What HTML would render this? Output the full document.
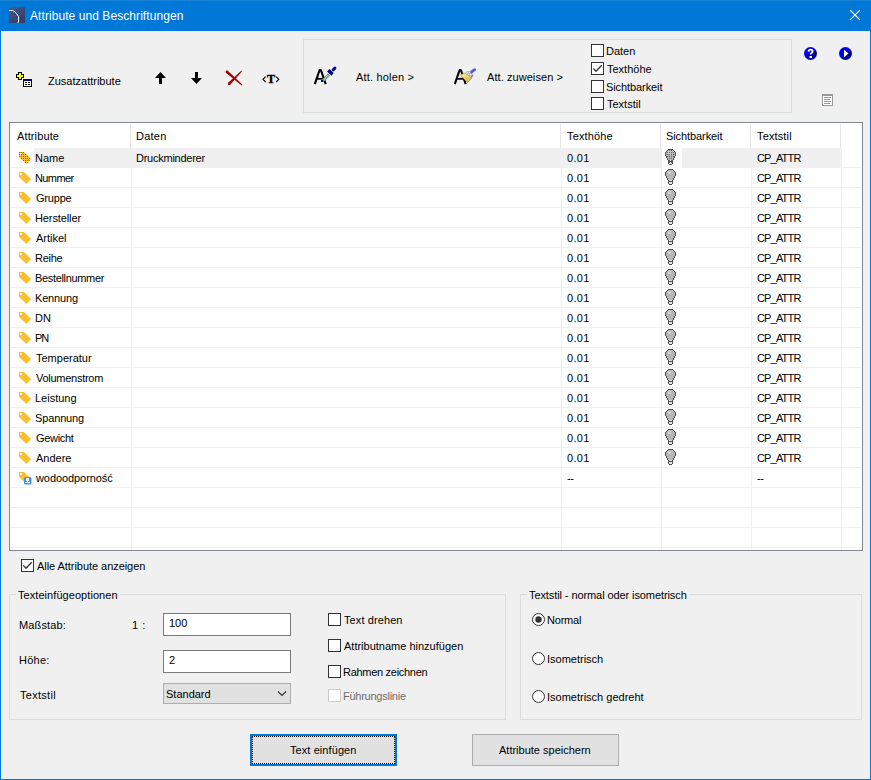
<!DOCTYPE html>
<html><head><meta charset="utf-8"><style>
html,body{margin:0;padding:0;}
body{width:871px;height:780px;position:relative;overflow:hidden;background:#0078d7;font-family:'Liberation Sans', sans-serif;}
.a{position:absolute;box-sizing:border-box;}
.t{position:absolute;font-size:11px;line-height:13px;white-space:nowrap;color:#000;}
svg{position:absolute;overflow:visible;}
</style></head><body>
<!-- client area -->
<div class="a" style="left:1px;top:31px;width:869px;height:748px;background:#f0f0f0"></div>
<div class="a" style="left:0;top:0;width:871px;height:1px;background:#1883d7"></div>
<!-- title icon -->
<svg style="left:9px;top:7px" width="16" height="16" viewBox="0 0 16 16">
 <defs><linearGradient id="tg" x1="0" y1="0" x2="1" y2="1"><stop offset="0" stop-color="#4a5a8a"/><stop offset="1" stop-color="#2c3a66"/></linearGradient></defs>
 <rect width="16" height="16" fill="url(#tg)"/>
 <path d="M0 3.5 H3.5 L5.5 4.5 L7.5 6.5 L8.5 8 L9.5 9.5 V15 L8.5 16" fill="none" stroke="#fff" stroke-width="1"/>
</svg>
<!-- close -->
<svg style="left:850px;top:10px" width="11" height="11" viewBox="0 0 11 11"><path d="M0.5 0.5 L9.5 9.5 M9.5 0.5 L0.5 9.5" stroke="#fff" stroke-width="1.1" fill="none" stroke-linecap="square"/></svg>

<!-- toolbar: plus-table -->
<svg style="left:16px;top:72px" width="16" height="15" viewBox="0 0 16 15" shape-rendering="crispEdges">
 <path d="M2 0h4v2h2v4h-2v2h-4v-2h-2v-4h2z" fill="#000"/>
 <path d="M3 1h2v2h2v2h-2v2h-2v-2h-2v-2h2z" fill="#ffff00"/>
 <rect x="7" y="7" width="9" height="8" fill="#000"/>
 <rect x="7" y="7" width="9" height="2" fill="#000080"/>
 <rect x="8" y="9" width="7" height="5" fill="#fff"/>
 <rect x="9" y="10" width="2" height="1" fill="#000"/><rect x="12" y="10" width="2" height="1" fill="#000"/>
 <rect x="9" y="12" width="2" height="1" fill="#000"/><rect x="12" y="12" width="2" height="1" fill="#000"/>
</svg>
<!-- up arrow -->
<svg style="left:154px;top:71px" width="14" height="14" viewBox="0 0 14 14"><path d="M1 7 L6.5 1 L12 7 H8 V13 H5 V7 Z" fill="#000"/></svg>
<!-- down arrow -->
<svg style="left:190px;top:71px" width="14" height="14" viewBox="0 0 14 14"><path d="M5 1 H8 V7 H12 L6.5 13 L1 7 H5 Z" fill="#000"/></svg>
<!-- red X -->
<svg style="left:225px;top:70px" width="18" height="16" viewBox="0 0 18 16">
 <path d="M0.88 2.86 L16.67 15.38 L17.33 14.62 L2.72 0.74 Z" fill="#a00000"/><circle cx="1.9" cy="1.9" r="1.3" fill="#a00000"/>
 <path d="M5.20 14.78 L16.96 1.55 L16.24 0.85 L3.20 12.82 Z" fill="#a00000"/><circle cx="4.1" cy="13.9" r="1.3" fill="#a00000"/>
</svg>
<!-- <T> -->
<svg style="left:262px;top:73px" width="19" height="12" viewBox="0 0 19 12">
 <path d="M3.6 3.6 L1 6.3 L3.6 9" stroke="#000" stroke-width="1.1" fill="none"/>
 <path d="M14.2 3.6 L16.8 6.3 L14.2 9" stroke="#000" stroke-width="1.1" fill="none"/>
</svg>
<div class="t" style="left:267px;top:73px;font-family:'Liberation Serif',serif;font-weight:bold;font-size:12px;line-height:13px;-webkit-text-stroke:0.4px #000">T</div>
<!-- group box top -->
<div class="a" style="left:303px;top:39px;width:489px;height:74px;border:1px solid #dcdcdc"></div>
<!-- A dropper -->
<svg style="left:313px;top:66px" width="26" height="20" viewBox="0 0 26 20">
 <path d="M1.8 18.2 L6.6 4 H7.9 L12.7 18.2" stroke="#000" stroke-width="2.1" fill="none" stroke-linejoin="bevel"/>
 <path d="M4 12.8 H10.5" stroke="#000" stroke-width="1.8"/>
 <path d="M16 8.5 L9.5 15" stroke="#5e8c94" stroke-width="3"/>
 <path d="M15.2 9.3 L10 14.5" stroke="#f4f08a" stroke-width="1.2" stroke-dasharray="1 0.6"/>
 <rect x="8" y="14" width="2.2" height="2" fill="#00008b"/>
 <path d="M16.5 3 L14 5.5 L18.5 9.8 L20.7 7 Z" fill="#00008b"/>
 <path d="M20.3 3.7 L21.9 2.1" stroke="#00008b" stroke-width="3" stroke-linecap="round"/>
</svg>
<!-- A brush -->
<svg style="left:453px;top:66px" width="26" height="20" viewBox="0 0 26 20">
 <path d="M1.8 18.2 L6.6 4 H7.9 L12.7 18.2" stroke="#000" stroke-width="2.1" fill="none" stroke-linejoin="bevel"/>
 <path d="M4 12.8 H10.5" stroke="#000" stroke-width="1.8"/>
 <defs><linearGradient id="yb" x1="0" y1="0" x2="0.6" y2="1"><stop offset="0" stop-color="#fff8b0"/><stop offset="1" stop-color="#d8b040"/></linearGradient></defs>
 <path d="M7 9 L12 7 L19 12 L14.5 16.5 Z" fill="url(#yb)" stroke="#a08020" stroke-width="0.5"/>
 <path d="M12.5 6.5 L14 5 L17 5 L20.5 8.5 L18.5 11.5 Z" fill="#b8bcc8"/>
 <path d="M14 6 L15 7 M16 6 L17 7 M15 8 L16 9 M17 8 L18 9" stroke="#f4f4f8" stroke-width="0.8"/>
 <path d="M20 9.2 L18.4 11.2" stroke="#405060" stroke-width="1"/>
 <path d="M18.6 5.9 L21.6 3.7" stroke="#5656d0" stroke-width="2.8" stroke-linecap="round"/>
</svg>
<!-- checkboxes in group -->
<div class="a" style="left:591px;top:44px;width:13px;height:13px;border:1px solid #333;background:#fff"></div>
<div class="a" style="left:591px;top:62px;width:13px;height:13px;border:1px solid #333;background:#fff"></div>
<svg style="left:591px;top:62px" width="13" height="13" viewBox="0 0 13 13"><path d="M2.3 6.4 L5 9.2 L10.7 3.3" stroke="#333" stroke-width="1.3" fill="none"/></svg>
<div class="a" style="left:591px;top:80px;width:13px;height:13px;border:1px solid #333;background:#fff"></div>
<div class="a" style="left:591px;top:97px;width:13px;height:13px;border:1px solid #333;background:#fff"></div>

<!-- help / play -->
<svg style="left:804px;top:47px" width="13" height="13" viewBox="0 0 13 13">
 <defs><linearGradient id="hb" x1="0.2" y1="0.2" x2="0.8" y2="0.8"><stop offset="0.35" stop-color="#0000f0"/><stop offset="0.65" stop-color="#000090"/></linearGradient></defs>
 <circle cx="6.5" cy="6.5" r="6.5" fill="url(#hb)"/>
 <path d="M4.5 4.6 Q4.6 2.6 6.6 2.6 Q8.6 2.6 8.6 4.4 Q8.6 5.6 7.3 6.2 Q6.8 6.6 6.8 7.6" stroke="#fff" stroke-width="1.9" fill="none"/>
 <rect x="5.5" y="9" width="2.5" height="2" fill="#fff"/>
</svg>
<svg style="left:839px;top:47px" width="13" height="13" viewBox="0 0 13 13">
 <circle cx="6.5" cy="6.5" r="6.5" fill="url(#hb)"/>
 <path d="M5 2.8 L9.5 6.5 L5 10.2 Z" fill="#fff"/>
</svg>
<!-- doc icon -->
<svg style="left:822px;top:94px" width="11" height="12" viewBox="0 0 11 12" shape-rendering="crispEdges">
 <rect x="0" y="0" width="11" height="12" fill="#9a9a9a"/>
 <rect x="1" y="2" width="9" height="9" fill="#fff"/>
 <rect x="2" y="3" width="7" height="1" fill="#9a9a9a"/>
 <rect x="2" y="5" width="6" height="1" fill="#9a9a9a"/>
 <rect x="2" y="7" width="7" height="1" fill="#9a9a9a"/>
 <rect x="2" y="9" width="6" height="1" fill="#9a9a9a"/>
</svg>
<div class="a" style="left:9px;top:122px;width:854px;height:429px;border:1px solid #828790;background:#fff"></div><div class="a" style="left:11px;top:167px;width:850px;height:1px;background:#f0f0f0"></div><div class="a" style="left:11px;top:187px;width:850px;height:1px;background:#f0f0f0"></div><div class="a" style="left:11px;top:207px;width:850px;height:1px;background:#f0f0f0"></div><div class="a" style="left:11px;top:227px;width:850px;height:1px;background:#f0f0f0"></div><div class="a" style="left:11px;top:247px;width:850px;height:1px;background:#f0f0f0"></div><div class="a" style="left:11px;top:267px;width:850px;height:1px;background:#f0f0f0"></div><div class="a" style="left:11px;top:287px;width:850px;height:1px;background:#f0f0f0"></div><div class="a" style="left:11px;top:307px;width:850px;height:1px;background:#f0f0f0"></div><div class="a" style="left:11px;top:327px;width:850px;height:1px;background:#f0f0f0"></div><div class="a" style="left:11px;top:347px;width:850px;height:1px;background:#f0f0f0"></div><div class="a" style="left:11px;top:367px;width:850px;height:1px;background:#f0f0f0"></div><div class="a" style="left:11px;top:387px;width:850px;height:1px;background:#f0f0f0"></div><div class="a" style="left:11px;top:407px;width:850px;height:1px;background:#f0f0f0"></div><div class="a" style="left:11px;top:427px;width:850px;height:1px;background:#f0f0f0"></div><div class="a" style="left:11px;top:447px;width:850px;height:1px;background:#f0f0f0"></div><div class="a" style="left:11px;top:467px;width:850px;height:1px;background:#f0f0f0"></div><div class="a" style="left:11px;top:487px;width:850px;height:1px;background:#f0f0f0"></div><div class="a" style="left:11px;top:507px;width:850px;height:1px;background:#f0f0f0"></div><div class="a" style="left:11px;top:527px;width:850px;height:1px;background:#f0f0f0"></div><div class="a" style="left:11px;top:547px;width:850px;height:1px;background:#f0f0f0"></div><div class="a" style="left:131px;top:168px;width:1px;height:382px;background:#f0f0f0"></div><div class="a" style="left:561px;top:168px;width:1px;height:382px;background:#f0f0f0"></div><div class="a" style="left:661px;top:168px;width:1px;height:382px;background:#f0f0f0"></div><div class="a" style="left:751px;top:168px;width:1px;height:382px;background:#f0f0f0"></div><div class="a" style="left:841px;top:168px;width:1px;height:382px;background:#f0f0f0"></div><div class="a" style="left:130px;top:124px;width:1px;height:24px;background:#e5e5e5"></div><div class="a" style="left:560px;top:124px;width:1px;height:24px;background:#e5e5e5"></div><div class="a" style="left:660px;top:124px;width:1px;height:24px;background:#e5e5e5"></div><div class="a" style="left:750px;top:124px;width:1px;height:24px;background:#e5e5e5"></div><div class="a" style="left:840px;top:124px;width:1px;height:24px;background:#e5e5e5"></div><div class="a" style="left:34px;top:148px;width:808px;height:20px;background:#f0f0f0"></div><div class="a" style="left:662px;top:148px;width:20px;height:20px;background:#fff"></div><svg width="0" height="0" style="position:absolute"><defs><pattern id="dith" width="2" height="2" patternUnits="userSpaceOnUse"><rect width="1" height="1" fill="#0a78dc"/></pattern><pattern id="dith2" width="2" height="2" patternUnits="userSpaceOnUse"><rect y="1" width="1" height="1" fill="#0a78dc"/></pattern><clipPath id="tagclip"><path d="M0 0 H5 L12 7 L7.5 12 L0 5 Z"/></clipPath></defs></svg><svg style="left:19px;top:152px" width="14" height="17" viewBox="0 0 14 17"><path d="M0 0 H5 L12 7 L7.5 12 L0 5 Z" fill="#ffbe2e"/><rect x="1" y="1" width="2" height="2" fill="#eaf4ff"/><path d="M0 0 H5 L12 7 L7.5 12 L0 5 Z" fill="url(#dith)"/></svg><svg style="left:665px;top:149px" width="11" height="16" viewBox="0 0 11 16" shape-rendering="crispEdges"><path d="M3 0h5v1h-5zM2 1h7v1h-7zM1 2h9v1h-9zM0 3h11v1h-11zM0 4h11v1h-11zM0 5h11v1h-11zM0 6h11v1h-11zM1 7h9v1h-9zM1 8h9v1h-9zM2 9h7v1h-7zM2 10h7v1h-7zM3 11h5v1h-5zM3 12h5v1h-5zM3 13h5v1h-5zM3 14h5v1h-5zM4 15h3v1h-3z" fill="#4d4d4d"/><path d="M3 1h5v1h-5zM2 2h7v1h-7zM1 3h9v1h-9zM1 4h9v1h-9zM1 5h9v1h-9zM1 6h9v1h-9zM2 7h7v1h-7zM2 8h7v1h-7zM3 9h5v1h-5zM3 10h5v1h-5zM4 11h3v1h-3zM4 13h3v1h-3zM4 14h3v1h-3z" fill="#b6b6b6"/><rect x="3" y="2" width="3" height="3" fill="#cfcfcf"/><rect x="4" y="11" width="3" height="1" fill="#dedede"/><rect x="4" y="13" width="3" height="2" fill="#e4e4e4"/><path d="M3 0h5v1h-5zM2 1h7v1h-7zM1 2h9v1h-9zM0 3h11v1h-11zM0 4h11v1h-11zM0 5h11v1h-11zM0 6h11v1h-11zM1 7h9v1h-9zM1 8h9v1h-9zM2 9h7v1h-7zM2 10h7v1h-7zM3 11h5v1h-5zM3 12h5v1h-5zM3 13h5v1h-5zM3 14h5v1h-5zM4 15h3v1h-3z" fill="url(#dith2)"/></svg><svg style="left:19px;top:172px" width="14" height="17" viewBox="0 0 14 17"><path d="M0 0 H5 L12 7 L7.5 12 L0 5 Z" fill="#ffbe2e"/><rect x="1" y="1" width="2" height="2" fill="#eaf4ff"/></svg><svg style="left:665px;top:169px" width="11" height="16" viewBox="0 0 11 16" shape-rendering="crispEdges"><path d="M3 0h5v1h-5zM2 1h7v1h-7zM1 2h9v1h-9zM0 3h11v1h-11zM0 4h11v1h-11zM0 5h11v1h-11zM0 6h11v1h-11zM1 7h9v1h-9zM1 8h9v1h-9zM2 9h7v1h-7zM2 10h7v1h-7zM3 11h5v1h-5zM3 12h5v1h-5zM3 13h5v1h-5zM3 14h5v1h-5zM4 15h3v1h-3z" fill="#4d4d4d"/><path d="M3 1h5v1h-5zM2 2h7v1h-7zM1 3h9v1h-9zM1 4h9v1h-9zM1 5h9v1h-9zM1 6h9v1h-9zM2 7h7v1h-7zM2 8h7v1h-7zM3 9h5v1h-5zM3 10h5v1h-5zM4 11h3v1h-3zM4 13h3v1h-3zM4 14h3v1h-3z" fill="#b6b6b6"/><rect x="3" y="2" width="3" height="3" fill="#cfcfcf"/><rect x="4" y="11" width="3" height="1" fill="#dedede"/><rect x="4" y="13" width="3" height="2" fill="#e4e4e4"/></svg><svg style="left:19px;top:192px" width="14" height="17" viewBox="0 0 14 17"><path d="M0 0 H5 L12 7 L7.5 12 L0 5 Z" fill="#ffbe2e"/><rect x="1" y="1" width="2" height="2" fill="#eaf4ff"/></svg><svg style="left:665px;top:189px" width="11" height="16" viewBox="0 0 11 16" shape-rendering="crispEdges"><path d="M3 0h5v1h-5zM2 1h7v1h-7zM1 2h9v1h-9zM0 3h11v1h-11zM0 4h11v1h-11zM0 5h11v1h-11zM0 6h11v1h-11zM1 7h9v1h-9zM1 8h9v1h-9zM2 9h7v1h-7zM2 10h7v1h-7zM3 11h5v1h-5zM3 12h5v1h-5zM3 13h5v1h-5zM3 14h5v1h-5zM4 15h3v1h-3z" fill="#4d4d4d"/><path d="M3 1h5v1h-5zM2 2h7v1h-7zM1 3h9v1h-9zM1 4h9v1h-9zM1 5h9v1h-9zM1 6h9v1h-9zM2 7h7v1h-7zM2 8h7v1h-7zM3 9h5v1h-5zM3 10h5v1h-5zM4 11h3v1h-3zM4 13h3v1h-3zM4 14h3v1h-3z" fill="#b6b6b6"/><rect x="3" y="2" width="3" height="3" fill="#cfcfcf"/><rect x="4" y="11" width="3" height="1" fill="#dedede"/><rect x="4" y="13" width="3" height="2" fill="#e4e4e4"/></svg><svg style="left:19px;top:212px" width="14" height="17" viewBox="0 0 14 17"><path d="M0 0 H5 L12 7 L7.5 12 L0 5 Z" fill="#ffbe2e"/><rect x="1" y="1" width="2" height="2" fill="#eaf4ff"/></svg><svg style="left:665px;top:209px" width="11" height="16" viewBox="0 0 11 16" shape-rendering="crispEdges"><path d="M3 0h5v1h-5zM2 1h7v1h-7zM1 2h9v1h-9zM0 3h11v1h-11zM0 4h11v1h-11zM0 5h11v1h-11zM0 6h11v1h-11zM1 7h9v1h-9zM1 8h9v1h-9zM2 9h7v1h-7zM2 10h7v1h-7zM3 11h5v1h-5zM3 12h5v1h-5zM3 13h5v1h-5zM3 14h5v1h-5zM4 15h3v1h-3z" fill="#4d4d4d"/><path d="M3 1h5v1h-5zM2 2h7v1h-7zM1 3h9v1h-9zM1 4h9v1h-9zM1 5h9v1h-9zM1 6h9v1h-9zM2 7h7v1h-7zM2 8h7v1h-7zM3 9h5v1h-5zM3 10h5v1h-5zM4 11h3v1h-3zM4 13h3v1h-3zM4 14h3v1h-3z" fill="#b6b6b6"/><rect x="3" y="2" width="3" height="3" fill="#cfcfcf"/><rect x="4" y="11" width="3" height="1" fill="#dedede"/><rect x="4" y="13" width="3" height="2" fill="#e4e4e4"/></svg><svg style="left:19px;top:232px" width="14" height="17" viewBox="0 0 14 17"><path d="M0 0 H5 L12 7 L7.5 12 L0 5 Z" fill="#ffbe2e"/><rect x="1" y="1" width="2" height="2" fill="#eaf4ff"/></svg><svg style="left:665px;top:229px" width="11" height="16" viewBox="0 0 11 16" shape-rendering="crispEdges"><path d="M3 0h5v1h-5zM2 1h7v1h-7zM1 2h9v1h-9zM0 3h11v1h-11zM0 4h11v1h-11zM0 5h11v1h-11zM0 6h11v1h-11zM1 7h9v1h-9zM1 8h9v1h-9zM2 9h7v1h-7zM2 10h7v1h-7zM3 11h5v1h-5zM3 12h5v1h-5zM3 13h5v1h-5zM3 14h5v1h-5zM4 15h3v1h-3z" fill="#4d4d4d"/><path d="M3 1h5v1h-5zM2 2h7v1h-7zM1 3h9v1h-9zM1 4h9v1h-9zM1 5h9v1h-9zM1 6h9v1h-9zM2 7h7v1h-7zM2 8h7v1h-7zM3 9h5v1h-5zM3 10h5v1h-5zM4 11h3v1h-3zM4 13h3v1h-3zM4 14h3v1h-3z" fill="#b6b6b6"/><rect x="3" y="2" width="3" height="3" fill="#cfcfcf"/><rect x="4" y="11" width="3" height="1" fill="#dedede"/><rect x="4" y="13" width="3" height="2" fill="#e4e4e4"/></svg><svg style="left:19px;top:252px" width="14" height="17" viewBox="0 0 14 17"><path d="M0 0 H5 L12 7 L7.5 12 L0 5 Z" fill="#ffbe2e"/><rect x="1" y="1" width="2" height="2" fill="#eaf4ff"/></svg><svg style="left:665px;top:249px" width="11" height="16" viewBox="0 0 11 16" shape-rendering="crispEdges"><path d="M3 0h5v1h-5zM2 1h7v1h-7zM1 2h9v1h-9zM0 3h11v1h-11zM0 4h11v1h-11zM0 5h11v1h-11zM0 6h11v1h-11zM1 7h9v1h-9zM1 8h9v1h-9zM2 9h7v1h-7zM2 10h7v1h-7zM3 11h5v1h-5zM3 12h5v1h-5zM3 13h5v1h-5zM3 14h5v1h-5zM4 15h3v1h-3z" fill="#4d4d4d"/><path d="M3 1h5v1h-5zM2 2h7v1h-7zM1 3h9v1h-9zM1 4h9v1h-9zM1 5h9v1h-9zM1 6h9v1h-9zM2 7h7v1h-7zM2 8h7v1h-7zM3 9h5v1h-5zM3 10h5v1h-5zM4 11h3v1h-3zM4 13h3v1h-3zM4 14h3v1h-3z" fill="#b6b6b6"/><rect x="3" y="2" width="3" height="3" fill="#cfcfcf"/><rect x="4" y="11" width="3" height="1" fill="#dedede"/><rect x="4" y="13" width="3" height="2" fill="#e4e4e4"/></svg><svg style="left:19px;top:272px" width="14" height="17" viewBox="0 0 14 17"><path d="M0 0 H5 L12 7 L7.5 12 L0 5 Z" fill="#ffbe2e"/><rect x="1" y="1" width="2" height="2" fill="#eaf4ff"/></svg><svg style="left:665px;top:269px" width="11" height="16" viewBox="0 0 11 16" shape-rendering="crispEdges"><path d="M3 0h5v1h-5zM2 1h7v1h-7zM1 2h9v1h-9zM0 3h11v1h-11zM0 4h11v1h-11zM0 5h11v1h-11zM0 6h11v1h-11zM1 7h9v1h-9zM1 8h9v1h-9zM2 9h7v1h-7zM2 10h7v1h-7zM3 11h5v1h-5zM3 12h5v1h-5zM3 13h5v1h-5zM3 14h5v1h-5zM4 15h3v1h-3z" fill="#4d4d4d"/><path d="M3 1h5v1h-5zM2 2h7v1h-7zM1 3h9v1h-9zM1 4h9v1h-9zM1 5h9v1h-9zM1 6h9v1h-9zM2 7h7v1h-7zM2 8h7v1h-7zM3 9h5v1h-5zM3 10h5v1h-5zM4 11h3v1h-3zM4 13h3v1h-3zM4 14h3v1h-3z" fill="#b6b6b6"/><rect x="3" y="2" width="3" height="3" fill="#cfcfcf"/><rect x="4" y="11" width="3" height="1" fill="#dedede"/><rect x="4" y="13" width="3" height="2" fill="#e4e4e4"/></svg><svg style="left:19px;top:292px" width="14" height="17" viewBox="0 0 14 17"><path d="M0 0 H5 L12 7 L7.5 12 L0 5 Z" fill="#ffbe2e"/><rect x="1" y="1" width="2" height="2" fill="#eaf4ff"/></svg><svg style="left:665px;top:289px" width="11" height="16" viewBox="0 0 11 16" shape-rendering="crispEdges"><path d="M3 0h5v1h-5zM2 1h7v1h-7zM1 2h9v1h-9zM0 3h11v1h-11zM0 4h11v1h-11zM0 5h11v1h-11zM0 6h11v1h-11zM1 7h9v1h-9zM1 8h9v1h-9zM2 9h7v1h-7zM2 10h7v1h-7zM3 11h5v1h-5zM3 12h5v1h-5zM3 13h5v1h-5zM3 14h5v1h-5zM4 15h3v1h-3z" fill="#4d4d4d"/><path d="M3 1h5v1h-5zM2 2h7v1h-7zM1 3h9v1h-9zM1 4h9v1h-9zM1 5h9v1h-9zM1 6h9v1h-9zM2 7h7v1h-7zM2 8h7v1h-7zM3 9h5v1h-5zM3 10h5v1h-5zM4 11h3v1h-3zM4 13h3v1h-3zM4 14h3v1h-3z" fill="#b6b6b6"/><rect x="3" y="2" width="3" height="3" fill="#cfcfcf"/><rect x="4" y="11" width="3" height="1" fill="#dedede"/><rect x="4" y="13" width="3" height="2" fill="#e4e4e4"/></svg><svg style="left:19px;top:312px" width="14" height="17" viewBox="0 0 14 17"><path d="M0 0 H5 L12 7 L7.5 12 L0 5 Z" fill="#ffbe2e"/><rect x="1" y="1" width="2" height="2" fill="#eaf4ff"/></svg><svg style="left:665px;top:309px" width="11" height="16" viewBox="0 0 11 16" shape-rendering="crispEdges"><path d="M3 0h5v1h-5zM2 1h7v1h-7zM1 2h9v1h-9zM0 3h11v1h-11zM0 4h11v1h-11zM0 5h11v1h-11zM0 6h11v1h-11zM1 7h9v1h-9zM1 8h9v1h-9zM2 9h7v1h-7zM2 10h7v1h-7zM3 11h5v1h-5zM3 12h5v1h-5zM3 13h5v1h-5zM3 14h5v1h-5zM4 15h3v1h-3z" fill="#4d4d4d"/><path d="M3 1h5v1h-5zM2 2h7v1h-7zM1 3h9v1h-9zM1 4h9v1h-9zM1 5h9v1h-9zM1 6h9v1h-9zM2 7h7v1h-7zM2 8h7v1h-7zM3 9h5v1h-5zM3 10h5v1h-5zM4 11h3v1h-3zM4 13h3v1h-3zM4 14h3v1h-3z" fill="#b6b6b6"/><rect x="3" y="2" width="3" height="3" fill="#cfcfcf"/><rect x="4" y="11" width="3" height="1" fill="#dedede"/><rect x="4" y="13" width="3" height="2" fill="#e4e4e4"/></svg><svg style="left:19px;top:332px" width="14" height="17" viewBox="0 0 14 17"><path d="M0 0 H5 L12 7 L7.5 12 L0 5 Z" fill="#ffbe2e"/><rect x="1" y="1" width="2" height="2" fill="#eaf4ff"/></svg><svg style="left:665px;top:329px" width="11" height="16" viewBox="0 0 11 16" shape-rendering="crispEdges"><path d="M3 0h5v1h-5zM2 1h7v1h-7zM1 2h9v1h-9zM0 3h11v1h-11zM0 4h11v1h-11zM0 5h11v1h-11zM0 6h11v1h-11zM1 7h9v1h-9zM1 8h9v1h-9zM2 9h7v1h-7zM2 10h7v1h-7zM3 11h5v1h-5zM3 12h5v1h-5zM3 13h5v1h-5zM3 14h5v1h-5zM4 15h3v1h-3z" fill="#4d4d4d"/><path d="M3 1h5v1h-5zM2 2h7v1h-7zM1 3h9v1h-9zM1 4h9v1h-9zM1 5h9v1h-9zM1 6h9v1h-9zM2 7h7v1h-7zM2 8h7v1h-7zM3 9h5v1h-5zM3 10h5v1h-5zM4 11h3v1h-3zM4 13h3v1h-3zM4 14h3v1h-3z" fill="#b6b6b6"/><rect x="3" y="2" width="3" height="3" fill="#cfcfcf"/><rect x="4" y="11" width="3" height="1" fill="#dedede"/><rect x="4" y="13" width="3" height="2" fill="#e4e4e4"/></svg><svg style="left:19px;top:352px" width="14" height="17" viewBox="0 0 14 17"><path d="M0 0 H5 L12 7 L7.5 12 L0 5 Z" fill="#ffbe2e"/><rect x="1" y="1" width="2" height="2" fill="#eaf4ff"/></svg><svg style="left:665px;top:349px" width="11" height="16" viewBox="0 0 11 16" shape-rendering="crispEdges"><path d="M3 0h5v1h-5zM2 1h7v1h-7zM1 2h9v1h-9zM0 3h11v1h-11zM0 4h11v1h-11zM0 5h11v1h-11zM0 6h11v1h-11zM1 7h9v1h-9zM1 8h9v1h-9zM2 9h7v1h-7zM2 10h7v1h-7zM3 11h5v1h-5zM3 12h5v1h-5zM3 13h5v1h-5zM3 14h5v1h-5zM4 15h3v1h-3z" fill="#4d4d4d"/><path d="M3 1h5v1h-5zM2 2h7v1h-7zM1 3h9v1h-9zM1 4h9v1h-9zM1 5h9v1h-9zM1 6h9v1h-9zM2 7h7v1h-7zM2 8h7v1h-7zM3 9h5v1h-5zM3 10h5v1h-5zM4 11h3v1h-3zM4 13h3v1h-3zM4 14h3v1h-3z" fill="#b6b6b6"/><rect x="3" y="2" width="3" height="3" fill="#cfcfcf"/><rect x="4" y="11" width="3" height="1" fill="#dedede"/><rect x="4" y="13" width="3" height="2" fill="#e4e4e4"/></svg><svg style="left:19px;top:372px" width="14" height="17" viewBox="0 0 14 17"><path d="M0 0 H5 L12 7 L7.5 12 L0 5 Z" fill="#ffbe2e"/><rect x="1" y="1" width="2" height="2" fill="#eaf4ff"/></svg><svg style="left:665px;top:369px" width="11" height="16" viewBox="0 0 11 16" shape-rendering="crispEdges"><path d="M3 0h5v1h-5zM2 1h7v1h-7zM1 2h9v1h-9zM0 3h11v1h-11zM0 4h11v1h-11zM0 5h11v1h-11zM0 6h11v1h-11zM1 7h9v1h-9zM1 8h9v1h-9zM2 9h7v1h-7zM2 10h7v1h-7zM3 11h5v1h-5zM3 12h5v1h-5zM3 13h5v1h-5zM3 14h5v1h-5zM4 15h3v1h-3z" fill="#4d4d4d"/><path d="M3 1h5v1h-5zM2 2h7v1h-7zM1 3h9v1h-9zM1 4h9v1h-9zM1 5h9v1h-9zM1 6h9v1h-9zM2 7h7v1h-7zM2 8h7v1h-7zM3 9h5v1h-5zM3 10h5v1h-5zM4 11h3v1h-3zM4 13h3v1h-3zM4 14h3v1h-3z" fill="#b6b6b6"/><rect x="3" y="2" width="3" height="3" fill="#cfcfcf"/><rect x="4" y="11" width="3" height="1" fill="#dedede"/><rect x="4" y="13" width="3" height="2" fill="#e4e4e4"/></svg><svg style="left:19px;top:392px" width="14" height="17" viewBox="0 0 14 17"><path d="M0 0 H5 L12 7 L7.5 12 L0 5 Z" fill="#ffbe2e"/><rect x="1" y="1" width="2" height="2" fill="#eaf4ff"/></svg><svg style="left:665px;top:389px" width="11" height="16" viewBox="0 0 11 16" shape-rendering="crispEdges"><path d="M3 0h5v1h-5zM2 1h7v1h-7zM1 2h9v1h-9zM0 3h11v1h-11zM0 4h11v1h-11zM0 5h11v1h-11zM0 6h11v1h-11zM1 7h9v1h-9zM1 8h9v1h-9zM2 9h7v1h-7zM2 10h7v1h-7zM3 11h5v1h-5zM3 12h5v1h-5zM3 13h5v1h-5zM3 14h5v1h-5zM4 15h3v1h-3z" fill="#4d4d4d"/><path d="M3 1h5v1h-5zM2 2h7v1h-7zM1 3h9v1h-9zM1 4h9v1h-9zM1 5h9v1h-9zM1 6h9v1h-9zM2 7h7v1h-7zM2 8h7v1h-7zM3 9h5v1h-5zM3 10h5v1h-5zM4 11h3v1h-3zM4 13h3v1h-3zM4 14h3v1h-3z" fill="#b6b6b6"/><rect x="3" y="2" width="3" height="3" fill="#cfcfcf"/><rect x="4" y="11" width="3" height="1" fill="#dedede"/><rect x="4" y="13" width="3" height="2" fill="#e4e4e4"/></svg><svg style="left:19px;top:412px" width="14" height="17" viewBox="0 0 14 17"><path d="M0 0 H5 L12 7 L7.5 12 L0 5 Z" fill="#ffbe2e"/><rect x="1" y="1" width="2" height="2" fill="#eaf4ff"/></svg><svg style="left:665px;top:409px" width="11" height="16" viewBox="0 0 11 16" shape-rendering="crispEdges"><path d="M3 0h5v1h-5zM2 1h7v1h-7zM1 2h9v1h-9zM0 3h11v1h-11zM0 4h11v1h-11zM0 5h11v1h-11zM0 6h11v1h-11zM1 7h9v1h-9zM1 8h9v1h-9zM2 9h7v1h-7zM2 10h7v1h-7zM3 11h5v1h-5zM3 12h5v1h-5zM3 13h5v1h-5zM3 14h5v1h-5zM4 15h3v1h-3z" fill="#4d4d4d"/><path d="M3 1h5v1h-5zM2 2h7v1h-7zM1 3h9v1h-9zM1 4h9v1h-9zM1 5h9v1h-9zM1 6h9v1h-9zM2 7h7v1h-7zM2 8h7v1h-7zM3 9h5v1h-5zM3 10h5v1h-5zM4 11h3v1h-3zM4 13h3v1h-3zM4 14h3v1h-3z" fill="#b6b6b6"/><rect x="3" y="2" width="3" height="3" fill="#cfcfcf"/><rect x="4" y="11" width="3" height="1" fill="#dedede"/><rect x="4" y="13" width="3" height="2" fill="#e4e4e4"/></svg><svg style="left:19px;top:432px" width="14" height="17" viewBox="0 0 14 17"><path d="M0 0 H5 L12 7 L7.5 12 L0 5 Z" fill="#ffbe2e"/><rect x="1" y="1" width="2" height="2" fill="#eaf4ff"/></svg><svg style="left:665px;top:429px" width="11" height="16" viewBox="0 0 11 16" shape-rendering="crispEdges"><path d="M3 0h5v1h-5zM2 1h7v1h-7zM1 2h9v1h-9zM0 3h11v1h-11zM0 4h11v1h-11zM0 5h11v1h-11zM0 6h11v1h-11zM1 7h9v1h-9zM1 8h9v1h-9zM2 9h7v1h-7zM2 10h7v1h-7zM3 11h5v1h-5zM3 12h5v1h-5zM3 13h5v1h-5zM3 14h5v1h-5zM4 15h3v1h-3z" fill="#4d4d4d"/><path d="M3 1h5v1h-5zM2 2h7v1h-7zM1 3h9v1h-9zM1 4h9v1h-9zM1 5h9v1h-9zM1 6h9v1h-9zM2 7h7v1h-7zM2 8h7v1h-7zM3 9h5v1h-5zM3 10h5v1h-5zM4 11h3v1h-3zM4 13h3v1h-3zM4 14h3v1h-3z" fill="#b6b6b6"/><rect x="3" y="2" width="3" height="3" fill="#cfcfcf"/><rect x="4" y="11" width="3" height="1" fill="#dedede"/><rect x="4" y="13" width="3" height="2" fill="#e4e4e4"/></svg><svg style="left:19px;top:452px" width="14" height="17" viewBox="0 0 14 17"><path d="M0 0 H5 L12 7 L7.5 12 L0 5 Z" fill="#ffbe2e"/><rect x="1" y="1" width="2" height="2" fill="#eaf4ff"/></svg><svg style="left:665px;top:449px" width="11" height="16" viewBox="0 0 11 16" shape-rendering="crispEdges"><path d="M3 0h5v1h-5zM2 1h7v1h-7zM1 2h9v1h-9zM0 3h11v1h-11zM0 4h11v1h-11zM0 5h11v1h-11zM0 6h11v1h-11zM1 7h9v1h-9zM1 8h9v1h-9zM2 9h7v1h-7zM2 10h7v1h-7zM3 11h5v1h-5zM3 12h5v1h-5zM3 13h5v1h-5zM3 14h5v1h-5zM4 15h3v1h-3z" fill="#4d4d4d"/><path d="M3 1h5v1h-5zM2 2h7v1h-7zM1 3h9v1h-9zM1 4h9v1h-9zM1 5h9v1h-9zM1 6h9v1h-9zM2 7h7v1h-7zM2 8h7v1h-7zM3 9h5v1h-5zM3 10h5v1h-5zM4 11h3v1h-3zM4 13h3v1h-3zM4 14h3v1h-3z" fill="#b6b6b6"/><rect x="3" y="2" width="3" height="3" fill="#cfcfcf"/><rect x="4" y="11" width="3" height="1" fill="#dedede"/><rect x="4" y="13" width="3" height="2" fill="#e4e4e4"/></svg><svg style="left:19px;top:472px" width="14" height="17" viewBox="0 0 14 17"><path d="M0 0 H5 L12 7 L7.5 12 L0 5 Z" fill="#ffbe2e"/><rect x="1" y="1" width="2" height="2" fill="#eaf4ff"/><rect x="5" y="5" width="7.5" height="7.5" rx="1.5" fill="#2c9cf8"/><rect x="7" y="6" width="3" height="3" fill="#fdf0e0"/><rect x="8" y="9" width="1" height="1" fill="#fdf0e0"/><rect x="6" y="10" width="5" height="1" fill="#fdf0e0"/></svg><div class="a" style="left:21px;top:559px;width:13px;height:13px;border:1px solid #333;background:#fff"></div><svg style="left:21px;top:559px" width="13" height="13" viewBox="0 0 13 13"><path d="M2.3 6.4 L5 9.2 L10.7 3.3" stroke="#333" stroke-width="1.3" fill="none"/></svg><div class="a" style="left:9px;top:594px;width:497px;height:126px;border:1px solid #dcdcdc"></div><div class="a" style="left:16px;top:590px;width:104px;height:8px;background:#f0f0f0"></div><div class="a" style="left:520px;top:594px;width:342px;height:126px;border:1px solid #dcdcdc"></div><div class="a" style="left:527px;top:590px;width:162px;height:8px;background:#f0f0f0"></div><div class="a" style="left:163px;top:613px;width:128px;height:23px;border:1px solid #7a7a7a;background:#fff"></div><div class="a" style="left:163px;top:650px;width:128px;height:23px;border:1px solid #7a7a7a;background:#fff"></div><div class="a" style="left:163px;top:683px;width:128px;height:21px;border:1px solid #adadad;background:#e1e1e1"></div><svg style="left:277px;top:690px" width="10" height="7" viewBox="0 0 10 7"><path d="M1 1.5 L5 5.5 L9 1.5" stroke="#333" stroke-width="1.2" fill="none"/></svg><div class="a" style="left:328px;top:613px;width:13px;height:13px;border:1px solid #333;background:#fff"></div><div class="a" style="left:328px;top:639px;width:13px;height:13px;border:1px solid #333;background:#fff"></div><div class="a" style="left:328px;top:665px;width:13px;height:13px;border:1px solid #333;background:#fff"></div><div class="a" style="left:328px;top:689px;width:13px;height:13px;border:1px solid #cccccc;background:#fff"></div><svg style="left:532px;top:613px" width="13" height="13" viewBox="0 0 13 13"><circle cx="6.5" cy="6.5" r="6" fill="#fff" stroke="#333" stroke-width="1"/><circle cx="6.5" cy="6.5" r="3.2" fill="#333"/></svg><svg style="left:532px;top:652px" width="13" height="13" viewBox="0 0 13 13"><circle cx="6.5" cy="6.5" r="6" fill="#fff" stroke="#333" stroke-width="1"/></svg><svg style="left:532px;top:690px" width="13" height="13" viewBox="0 0 13 13"><circle cx="6.5" cy="6.5" r="6" fill="#fff" stroke="#333" stroke-width="1"/></svg><div class="a" style="left:250px;top:734px;width:147px;height:32px;border:2px solid #0078d7;background:#e1e1e1"></div><div class="a" style="left:252px;top:736px;width:143px;height:28px;border:1px dotted #000"></div><div class="a" style="left:472px;top:734px;width:147px;height:32px;border:1px solid #adadad;background:#e1e1e1"></div>
<div class="t" style="left:30px;top:9px;font-size:12px;line-height:14px;color:#fff;letter-spacing:0.07px;">Attribute und Beschriftungen</div><div class="t" style="left:48px;top:75px;">Zusatzattribute</div><div class="t" style="left:356px;top:71px;letter-spacing:0.18px;">Att. holen &gt;</div><div class="t" style="left:487px;top:71px;letter-spacing:0.07px;">Att. zuweisen &gt;</div><div class="t" style="left:606px;top:45px;">Daten</div><div class="t" style="left:607px;top:63px;">Texthöhe</div><div class="t" style="left:606px;top:81px;letter-spacing:-0.09px;">Sichtbarkeit</div><div class="t" style="left:607px;top:98px;">Textstil</div><div class="t" style="left:17px;top:130px;letter-spacing:0.12px;">Attribute</div><div class="t" style="left:136px;top:130px;letter-spacing:0.25px;">Daten</div><div class="t" style="left:567px;top:130px;letter-spacing:0.14px;">Texthöhe</div><div class="t" style="left:666px;top:130px;letter-spacing:-0.09px;">Sichtbarkeit</div><div class="t" style="left:757px;top:130px;letter-spacing:0.14px;">Textstil</div><div class="t" style="left:35px;top:152px;">Name</div><div class="t" style="left:567px;top:152px;letter-spacing:0.33px;">0.01</div><div class="t" style="left:757px;top:152px;letter-spacing:-0.83px;">CP_ATTR</div><div class="t" style="left:35px;top:172px;letter-spacing:-0.60px;">Nummer</div><div class="t" style="left:567px;top:172px;letter-spacing:0.33px;">0.01</div><div class="t" style="left:757px;top:172px;letter-spacing:-0.83px;">CP_ATTR</div><div class="t" style="left:36px;top:192px;letter-spacing:-0.20px;">Gruppe</div><div class="t" style="left:567px;top:192px;letter-spacing:0.33px;">0.01</div><div class="t" style="left:757px;top:192px;letter-spacing:-0.83px;">CP_ATTR</div><div class="t" style="left:35px;top:212px;letter-spacing:-0.11px;">Hersteller</div><div class="t" style="left:567px;top:212px;letter-spacing:0.33px;">0.01</div><div class="t" style="left:757px;top:212px;letter-spacing:-0.83px;">CP_ATTR</div><div class="t" style="left:36px;top:232px;">Artikel</div><div class="t" style="left:567px;top:232px;letter-spacing:0.33px;">0.01</div><div class="t" style="left:757px;top:232px;letter-spacing:-0.83px;">CP_ATTR</div><div class="t" style="left:35px;top:252px;letter-spacing:-0.25px;">Reihe</div><div class="t" style="left:567px;top:252px;letter-spacing:0.33px;">0.01</div><div class="t" style="left:757px;top:252px;letter-spacing:-0.83px;">CP_ATTR</div><div class="t" style="left:35px;top:272px;letter-spacing:-0.33px;">Bestellnummer</div><div class="t" style="left:567px;top:272px;letter-spacing:0.33px;">0.01</div><div class="t" style="left:757px;top:272px;letter-spacing:-0.83px;">CP_ATTR</div><div class="t" style="left:35px;top:292px;letter-spacing:-0.17px;">Kennung</div><div class="t" style="left:567px;top:292px;letter-spacing:0.33px;">0.01</div><div class="t" style="left:757px;top:292px;letter-spacing:-0.83px;">CP_ATTR</div><div class="t" style="left:35px;top:312px;">DN</div><div class="t" style="left:567px;top:312px;letter-spacing:0.33px;">0.01</div><div class="t" style="left:757px;top:312px;letter-spacing:-0.83px;">CP_ATTR</div><div class="t" style="left:35px;top:332px;letter-spacing:-1.00px;">PN</div><div class="t" style="left:567px;top:332px;letter-spacing:0.33px;">0.01</div><div class="t" style="left:757px;top:332px;letter-spacing:-0.83px;">CP_ATTR</div><div class="t" style="left:36px;top:352px;">Temperatur</div><div class="t" style="left:567px;top:352px;letter-spacing:0.33px;">0.01</div><div class="t" style="left:757px;top:352px;letter-spacing:-0.83px;">CP_ATTR</div><div class="t" style="left:36px;top:372px;letter-spacing:-0.27px;">Volumenstrom</div><div class="t" style="left:567px;top:372px;letter-spacing:0.33px;">0.01</div><div class="t" style="left:757px;top:372px;letter-spacing:-0.83px;">CP_ATTR</div><div class="t" style="left:35px;top:392px;">Leistung</div><div class="t" style="left:567px;top:392px;letter-spacing:0.33px;">0.01</div><div class="t" style="left:757px;top:392px;letter-spacing:-0.83px;">CP_ATTR</div><div class="t" style="left:35px;top:412px;letter-spacing:-0.14px;">Spannung</div><div class="t" style="left:567px;top:412px;letter-spacing:0.33px;">0.01</div><div class="t" style="left:757px;top:412px;letter-spacing:-0.83px;">CP_ATTR</div><div class="t" style="left:36px;top:432px;letter-spacing:-0.33px;">Gewicht</div><div class="t" style="left:567px;top:432px;letter-spacing:0.33px;">0.01</div><div class="t" style="left:757px;top:432px;letter-spacing:-0.83px;">CP_ATTR</div><div class="t" style="left:36px;top:452px;">Andere</div><div class="t" style="left:567px;top:452px;letter-spacing:0.33px;">0.01</div><div class="t" style="left:757px;top:452px;letter-spacing:-0.83px;">CP_ATTR</div><div class="t" style="left:36px;top:472px;letter-spacing:-0.08px;">wodoodporność</div><div class="t" style="left:567px;top:472px;letter-spacing:-0.35px;">--</div><div class="t" style="left:757px;top:472px;letter-spacing:-0.35px;">--</div><div class="t" style="left:136px;top:152px;letter-spacing:-0.25px;">Druckminderer</div><div class="t" style="left:37px;top:560px;letter-spacing:-0.05px;">Alle Attribute anzeigen</div><div class="t" style="left:18px;top:589px;letter-spacing:0.06px;">Texteinfügeoptionen</div><div class="t" style="left:19px;top:619px;letter-spacing:0.14px;">Maßstab:</div><div class="t" style="left:132px;top:619px;letter-spacing:0.50px;">1 :</div><div class="t" style="left:19px;top:654px;letter-spacing:0.25px;">Höhe:</div><div class="t" style="left:20px;top:689px;letter-spacing:0.29px;">Textstil</div><div class="t" style="left:169px;top:617px;">100</div><div class="t" style="left:169px;top:654px;">2</div><div class="t" style="left:166px;top:688px;">Standard</div><div class="t" style="left:344px;top:614px;letter-spacing:0.10px;">Text drehen</div><div class="t" style="left:344px;top:640px;">Attributname hinzufügen</div><div class="t" style="left:343px;top:666px;letter-spacing:-0.29px;">Rahmen zeichnen</div><div class="t" style="left:343px;top:690px;color:#6d6d6d;letter-spacing:-0.25px;">Führungslinie</div><div class="t" style="left:529px;top:589px;letter-spacing:-0.09px;">Textstil - normal oder isometrisch</div><div class="t" style="left:547px;top:614px;letter-spacing:-0.20px;">Normal</div><div class="t" style="left:547px;top:653px;">Isometrisch</div><div class="t" style="left:547px;top:691px;">Isometrisch gedreht</div><div class="t" style="left:290px;top:744px;letter-spacing:0.08px;">Text einfügen</div><div class="t" style="left:499px;top:744px;">Attribute speichern</div>
</body></html>
